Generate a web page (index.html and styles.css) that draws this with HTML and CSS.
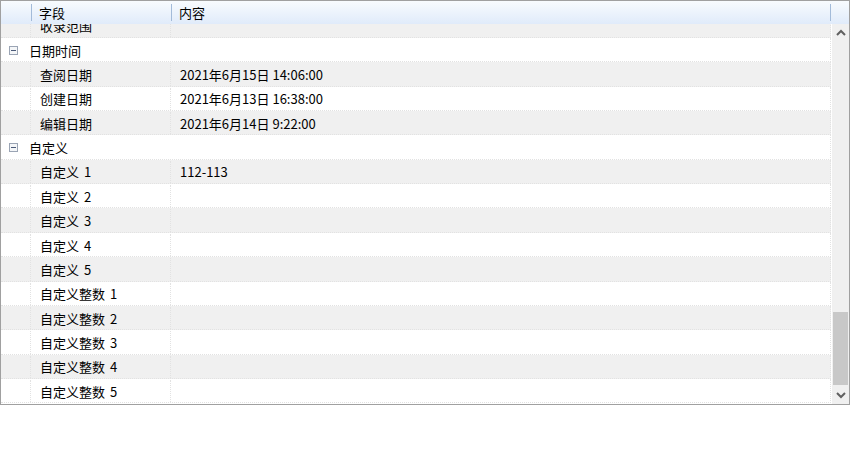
FILE: index.html
```html
<!DOCTYPE html>
<html>
<head>
<meta charset="utf-8">
<link rel="stylesheet" href="styles.css">
</head>
<body>
<div class="grid">
  <div class="header">
    <div class="hcell c0"></div>
    <div class="hcell c1">字段</div>
    <div class="hcell c2">内容</div>
    <div class="hcell c3"></div>
  </div>
  <div class="body">
    <div class="rows">
      <div class="inner">
        <div class="row alt"><div class="c0"></div><div class="c1">收录范围</div><div class="c2"></div></div>
        <div class="row group"><span class="exp"></span><span class="gname">日期时间</span></div>
        <div class="row alt"><div class="c0"></div><div class="c1">查阅日期</div><div class="c2">2021年6月15日 14:06:00</div></div>
        <div class="row"><div class="c0"></div><div class="c1">创建日期</div><div class="c2">2021年6月13日 16:38:00</div></div>
        <div class="row alt"><div class="c0"></div><div class="c1">编辑日期</div><div class="c2">2021年6月14日 9:22:00</div></div>
        <div class="row group"><span class="exp"></span><span class="gname">自定义</span></div>
        <div class="row alt"><div class="c0"></div><div class="c1">自定义 1</div><div class="c2">112-113</div></div>
        <div class="row"><div class="c0"></div><div class="c1">自定义 2</div><div class="c2"></div></div>
        <div class="row alt"><div class="c0"></div><div class="c1">自定义 3</div><div class="c2"></div></div>
        <div class="row"><div class="c0"></div><div class="c1">自定义 4</div><div class="c2"></div></div>
        <div class="row alt"><div class="c0"></div><div class="c1">自定义 5</div><div class="c2"></div></div>
        <div class="row"><div class="c0"></div><div class="c1">自定义整数 1</div><div class="c2"></div></div>
        <div class="row alt"><div class="c0"></div><div class="c1">自定义整数 2</div><div class="c2"></div></div>
        <div class="row"><div class="c0"></div><div class="c1">自定义整数 3</div><div class="c2"></div></div>
        <div class="row alt"><div class="c0"></div><div class="c1">自定义整数 4</div><div class="c2"></div></div>
        <div class="row"><div class="c0"></div><div class="c1">自定义整数 5</div><div class="c2"></div></div>
      </div>
    </div>
    <div class="vscroll">
      <div class="arrow">
        <svg width="10" height="7" viewBox="0 0 10 7"><path d="M1 6 L5 2 L9 6" fill="none" stroke="#606060" stroke-width="2"/></svg>
      </div>
      <div class="track"><div class="thumb"></div></div>
      <div class="arrow">
        <svg width="10" height="7" viewBox="0 0 10 7"><path d="M1 1 L5 5 L9 1" fill="none" stroke="#606060" stroke-width="2"/></svg>
      </div>
    </div>
  </div>
</div>
</body>
</html>
```
FILE: styles.css
```css
html, body {
  margin: 0;
  padding: 0;
  background: #ffffff;
}
body {
  font-family: "Noto Sans CJK SC", "Microsoft YaHei", sans-serif;
  font-size: 13px;
  color: #000;
}
.grid {
  width: 848px;
  height: 403px;
  border: 1px solid #a0a0a0;
  display: flex;
  flex-direction: column;
  overflow: hidden;
}
.header {
  height: 23px;
  flex: none;
  display: flex;
  background: linear-gradient(#f8fbfe, #e0ebfa);
}
.hcell {
  display: flex;
  align-items: center;
  padding-left: 7px;
  box-sizing: border-box;
  line-height: 1;
}
.hcell.c0 { width: 30px; padding: 0; }
.hcell.c1 { width: 140px; border-left: 1px solid #a3bbd9; }
.hcell.c2 { width: 659px; border-left: 1px solid #a3bbd9; }
.hcell.c3 { flex: 1; border-left: 1px solid #a3bbd9; }
.hcell.c1, .hcell.c2, .hcell.c3 { margin: 3px 0; }
.body {
  flex: 1;
  display: flex;
  min-height: 0;
}
.rows {
  width: 830px;
  overflow: hidden;
}
.inner {
  margin-top: -10.4px;
}
.row {
  height: 24.36px;
  display: flex;
  align-items: center;
  box-sizing: border-box;
  padding-top: 1px;
  border-bottom: 1px dotted #e2e2e2;
  border-right: 1px dotted #e2e2e2;
  background: #ffffff;
}
.row.alt { background: #f0f0f0; }
.row > div {
  height: 100%;
  display: flex;
  align-items: center;
  box-sizing: border-box;
}
.row .c0 { width: 30px; border-right: 1px dotted #e2e2e2; }
.row .c1 { width: 140px; padding-left: 9px; border-right: 1px dotted #e2e2e2; word-spacing: 2px; }
.row .c2 { flex: 1; padding-left: 9px; }
.row.group { background: #ffffff; }
.exp {
  width: 9px;
  height: 9px;
  box-sizing: border-box;
  border: 1px solid #9aa4b4;
  margin-left: 8px;
  margin-right: 11px;
  position: relative;
  background: #f4f6f8;
}
.exp::after {
  content: "";
  position: absolute;
  left: 1px;
  top: 3px;
  width: 5px;
  height: 1px;
  background: #4a5a78;
}
.vscroll {
  width: 17px;
  flex: none;
  background: #f0f0f0;
  display: flex;
  flex-direction: column;
  border-left: 1px solid #ffffff;
}
.arrow {
  height: 17px;
  display: flex;
  align-items: center;
  justify-content: center;
}
.track {
  flex: 1;
  position: relative;
}
.thumb {
  position: absolute;
  left: 1px;
  right: 1px;
  top: 271px;
  height: 73px;
  background: #c8c8c8;
}
```
